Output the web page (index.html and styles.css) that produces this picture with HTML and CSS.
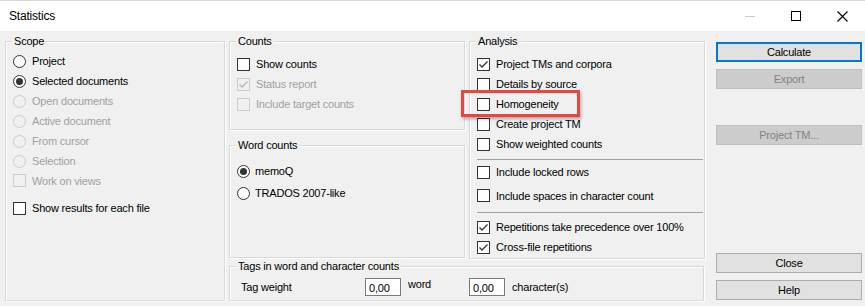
FILE: index.html
```html
<!DOCTYPE html>
<html>
<head>
<meta charset="utf-8">
<link rel="stylesheet" href="styles.css">
</head>
<body>
<div class="window">
  <div class="titlebar">
    <span class="title">Statistics</span>
    <div class="controls">
      <div class="ctl"><span class="min-ico"></span></div>
      <div class="ctl"><span class="max-ico"></span></div>
      <div class="ctl">
        <svg width="11" height="11" viewBox="0 0 11 11"><path d="M0.5 0.5 L10.5 10.5 M10.5 0.5 L0.5 10.5" stroke="#000" stroke-width="1.1" fill="none"/></svg>
      </div>
    </div>
  </div>
  <div class="content">
    <div class="group scope">
      <div class="legend">Scope</div>
      <div class="rows scope-rows">
        <div class="opt"><span class="radio"></span><span>Project</span></div>
        <div class="opt"><span class="radio on"></span><span>Selected documents</span></div>
        <div class="opt dis"><span class="radio"></span><span>Open documents</span></div>
        <div class="opt dis"><span class="radio"></span><span>Active document</span></div>
        <div class="opt dis"><span class="radio"></span><span>From cursor</span></div>
        <div class="opt dis"><span class="radio"></span><span>Selection</span></div>
        <div class="opt dis h19"><span class="check"></span><span>Work on views</span></div>
        <div class="opt mt8"><span class="check"></span><span>Show results for each file</span></div>
      </div>
    </div>
    <div class="middle">
      <div class="toprow">
        <div class="leftcol">
          <div class="group counts">
            <div class="legend">Counts</div>
            <div class="rows counts-rows">
              <div class="opt"><span class="check"></span><span>Show counts</span></div>
              <div class="opt dis"><span class="check"><svg width="11" height="11" viewBox="0 0 11 11"><path d="M1.5 5.5 L4 8 L9.5 2.5" stroke="#b5b5b5" stroke-width="1.3" fill="none"/></svg></span><span>Status report</span></div>
              <div class="opt dis"><span class="check"></span><span>Include target counts</span></div>
            </div>
          </div>
          <div class="group wordcounts">
            <div class="legend">Word counts</div>
            <div class="rows wc-rows">
              <div class="opt h22 g5"><span class="radio on"></span><span>memoQ</span></div>
              <div class="opt h22 g5"><span class="radio"></span><span>TRADOS 2007-like</span></div>
            </div>
          </div>
        </div>
        <div class="group analysis">
          <div class="legend">Analysis</div>
          <div class="rows an-rows">
            <div class="opt"><span class="check"><svg width="11" height="11" viewBox="0 0 11 11"><path d="M1.5 5.5 L4 8 L9.5 2.5" stroke="#333" stroke-width="1.3" fill="none"/></svg></span><span>Project TMs and corpora</span></div>
            <div class="opt"><span class="check"></span><span>Details by source</span></div>
            <div class="opt"><span class="check"></span><span>Homogeneity</span></div>
            <div class="opt"><span class="check"></span><span>Create project TM</span></div>
            <div class="opt"><span class="check"></span><span>Show weighted counts</span></div>
            <div class="sep sep1"></div>
            <div class="opt h24"><span class="check"></span><span>Include locked rows</span></div>
            <div class="opt h23"><span class="check"></span><span>Include spaces in character count</span></div>
            <div class="sep sep2"></div>
            <div class="opt"><span class="check"><svg width="11" height="11" viewBox="0 0 11 11"><path d="M1.5 5.5 L4 8 L9.5 2.5" stroke="#333" stroke-width="1.3" fill="none"/></svg></span><span>Repetitions take precedence over 100%</span></div>
            <div class="opt"><span class="check"><svg width="11" height="11" viewBox="0 0 11 11"><path d="M1.5 5.5 L4 8 L9.5 2.5" stroke="#333" stroke-width="1.3" fill="none"/></svg></span><span>Cross-file repetitions</span></div>
          </div>
        </div>
      </div>
      <div class="group tags">
        <div class="legend">Tags in word and character counts</div>
        <div class="tagrow">
          <span class="tw">Tag weight</span>
          <span class="input">0,00</span>
          <span class="word">word</span>
          <span class="input">0,00</span>
          <span class="chars">character(s)</span>
        </div>
      </div>
    </div>
    <div class="buttons">
      <div class="btn default">Calculate</div>
      <div class="btn disabled mt7">Export</div>
      <div class="btn disabled mt37">Project TM...</div>
      <div class="spacer"></div>
      <div class="btn">Close</div>
      <div class="btn mt7">Help</div>
    </div>
  </div>
  <div class="highlight"></div>
</div>
</body>
</html>
```
FILE: styles.css
```css
body {
  margin: 0;
  background: #f0f0f0;
  font-family: "Liberation Sans", Arial, sans-serif;
  font-size: 11px;
  letter-spacing: -0.2px;
  color: #000;
}
.window {
  width: 865px;
  height: 306px;
  background: #f0f0f0;
  position: relative;
  overflow: hidden;
}
.titlebar {
  height: 31px;
  box-sizing: border-box;
  background: #fff;
  border-top: 1px solid #d6d6d6;
  display: flex;
  align-items: center;
}
.title {
  flex: 1;
  padding-left: 9px;
  font-size: 12px;
  padding-bottom: 1px;
}
.controls {
  display: flex;
  height: 100%;
}
.ctl {
  width: 46px;
  display: flex;
  align-items: center;
  justify-content: center;
}
.min-ico {
  width: 10px;
  height: 1px;
  background: #c8c8c8;
}
.max-ico {
  width: 8px;
  height: 8px;
  border: 1px solid #000;
}
.content {
  display: flex;
  align-items: flex-start;
  padding: 10px 0 0 5px;
}
.group {
  box-sizing: border-box;
  border: 1px solid #d9d9d9;
  box-shadow: inset 1px 1px 0 #fff, 1px 1px 0 #fff;
}
.legend {
  display: table;
  margin: -8px 0 0 6px;
  padding: 0 2px;
  line-height: 15px;
  background: #f0f0f0;
}
.scope {
  width: 220px;
  height: 260px;
}
.middle {
  margin-left: 4px;
  width: 476px;
}
.toprow {
  display: flex;
  gap: 4px;
  align-items: flex-start;
}
.leftcol {
  width: 236px;
}
.counts {
  height: 89px;
}
.wordcounts {
  height: 113px;
  margin-top: 15px;
}
.analysis {
  width: 236px;
  height: 218px;
}
.tags {
  margin-top: 7px;
  height: 35px;
  width: 475px;
}
.rows {
  padding-left: 7px;
}
.scope-rows { margin-top: 2px; }
.counts-rows { margin-top: 5px; }
.wc-rows { margin-top: 7px; }
.an-rows { margin-top: 5px; padding-right: 1px; }
.opt {
  height: 20px;
  display: flex;
  align-items: center;
  gap: 6px;
}
.opt.h19 { height: 19px; }
.opt.h22 { height: 22px; }
.opt.h23 { height: 23px; }
.opt.h24 { height: 24px; }
.opt.g5 { gap: 5px; }
.opt.mt8 { margin-top: 8px; }
.opt.dis { color: #a0a0a0; }
.radio {
  width: 13px;
  height: 13px;
  box-sizing: border-box;
  border: 1px solid #333;
  border-radius: 50%;
  background: #fff;
  display: flex;
  align-items: center;
  justify-content: center;
  flex: none;
}
.radio.on::after {
  content: "";
  width: 7px;
  height: 7px;
  border-radius: 50%;
  background: #333;
}
.dis .radio {
  border-color: #cccccc;
  background: #f0f0f0;
}
.check {
  width: 13px;
  height: 13px;
  box-sizing: border-box;
  border: 1px solid #333;
  background: #fff;
  display: flex;
  align-items: center;
  justify-content: center;
  flex: none;
}
.dis .check {
  border-color: #cccccc;
  background: #f0f0f0;
}
.sep {
  height: 1px;
  background: #a0a0a0;
}
.sep1 { margin-top: 5px; }
.sep2 { margin-top: 5px; margin-bottom: 4px; }
.tagrow {
  display: flex;
  align-items: center;
  margin-top: 4px;
  height: 18px;
  padding-left: 11px;
}
.tw { width: 124px; flex: none; }
.input {
  width: 36px;
  height: 18px;
  flex: none;
  box-sizing: border-box;
  border: 1px solid #7a7a7a;
  background: #fff;
  padding: 2px 0 0 3px;
  line-height: 14px;
}
.word {
  width: 68px;
  flex: none;
  padding-left: 7px;
  box-sizing: border-box;
  align-self: flex-start;
}
.chars { padding-left: 7px; }
.buttons {
  margin-left: 11px;
  width: 146px;
  height: 258px;
  margin-top: 1px;
  display: flex;
  flex-direction: column;
}
.btn {
  height: 20px;
  box-sizing: border-box;
  border: 1px solid #adadad;
  background: #e1e1e1;
  display: flex;
  align-items: center;
  justify-content: center;
}
.btn.default {
  border: 2px solid #0078d7;
}
.btn.disabled {
  background: #cccccc;
  border-color: #bfbfbf;
  color: #838383;
}
.mt7 { margin-top: 7px; }
.mt37 { margin-top: 36px; }
.spacer { flex: 1; }
.highlight {
  position: absolute;
  left: 461px;
  top: 90px;
  width: 119px;
  height: 27px;
  box-sizing: border-box;
  border: 3px solid #e8463f;
  box-shadow: 1px 2px 3px rgba(0, 0, 0, 0.3);
}
```
